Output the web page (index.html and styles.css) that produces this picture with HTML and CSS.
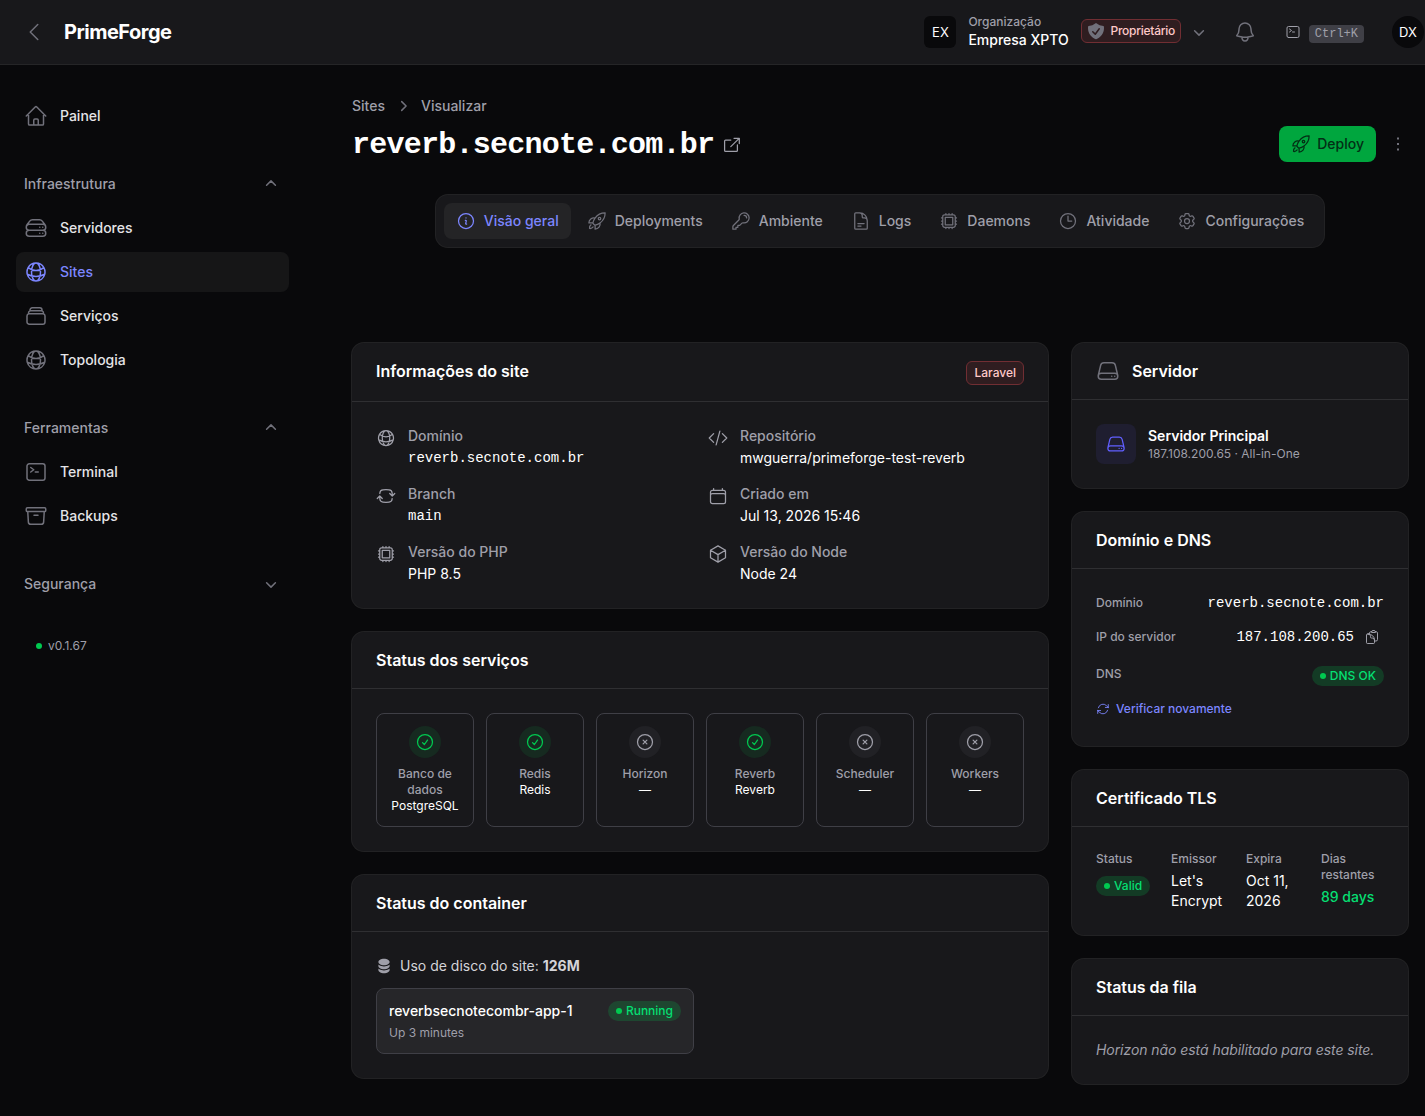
FILE: index.html
```html
<!DOCTYPE html>
<html lang="pt-BR">
<head>
    <meta charset="UTF-8">
    <meta name="viewport" content="width=device-width, initial-scale=1.0">
    <title>reverb.secnote.com.br - PrimeForge</title>
    <link rel="stylesheet" href="styles.css">
</head>
<body>

    <!-- Icon sprite -->
    <svg class="sprite" xmlns="http://www.w3.org/2000/svg">
        <symbol id="i-back" viewBox="0 0 24 24"><path d="M15.75 19.5 8.25 12l7.5-7.5"/></symbol>
        <symbol id="i-home" viewBox="0 0 24 24"><path d="M2.25 12l8.954-8.955c.44-.439 1.152-.439 1.591 0L21.75 12M4.5 9.75v10.125c0 .621.504 1.125 1.125 1.125H9.75v-4.875c0-.621.504-1.125 1.125-1.125h2.25c.621 0 1.125.504 1.125 1.125V21h4.125c.621 0 1.125-.504 1.125-1.125V9.75M8.25 21h8.25"/></symbol>
        <symbol id="i-server" viewBox="0 0 24 24"><path d="M5.25 14.25h13.5m-13.5 0a3 3 0 0 1-3-3m3 3a3 3 0 1 0 0 6h13.5a3 3 0 1 0 0-6m-16.5-3a3 3 0 0 1 3-3h13.5a3 3 0 0 1 3 3m-19.5 0a4.5 4.5 0 0 1 .9-2.7L5.737 5.1a3.375 3.375 0 0 1 2.7-1.35h7.126c1.062 0 2.062.5 2.7 1.35l2.587 3.45a4.5 4.5 0 0 1 .9 2.7m0 0a3 3 0 0 1-3 3m0 3h.008v.008h-.008v-.008Zm0-6h.008v.008h-.008v-.008Zm-3 6h.008v.008h-.008v-.008Zm0-6h.008v.008h-.008v-.008Z"/></symbol>
        <symbol id="i-drive" viewBox="0 0 24 24"><path d="M21.75 17.25v-.228a4.5 4.5 0 0 0-.12-1.03l-2.268-9.64a3.375 3.375 0 0 0-3.285-2.602H7.923a3.375 3.375 0 0 0-3.285 2.602l-2.268 9.64a4.5 4.5 0 0 0-.12 1.03v.228m19.5 0a3 3 0 0 1-3 3H5.25a3 3 0 0 1-3-3m19.5 0a3 3 0 0 0-3-3H5.25a3 3 0 0 0-3 3m16.5 0h.008v.008h-.008v-.008Zm-3 0h.008v.008h-.008v-.008Z"/></symbol>
        <symbol id="i-globe" viewBox="0 0 24 24"><path d="M12 21a9.004 9.004 0 0 0 8.716-6.747M12 21a9.004 9.004 0 0 1-8.716-6.747M12 21c2.485 0 4.5-4.03 4.5-9S14.485 3 12 3m0 18c-2.485 0-4.5-4.03-4.5-9S9.515 3 12 3m0 0a8.997 8.997 0 0 1 7.843 4.582M12 3a8.997 8.997 0 0 0-7.843 4.582m15.686 0A11.953 11.953 0 0 1 12 10.5c-2.998 0-5.74-1.1-7.843-2.918m15.686 0A8.959 8.959 0 0 1 21 12c0 .778-.099 1.533-.284 2.253m0 0A17.919 17.919 0 0 1 12 16.5c-3.162 0-6.133-.815-8.716-2.247m0 0A9.015 9.015 0 0 1 3 12c0-1.605.42-3.113 1.157-4.418"/></symbol>
        <symbol id="i-stack" viewBox="0 0 24 24"><path d="M6 6.878V6a2.25 2.25 0 0 1 2.25-2.25h7.5A2.25 2.25 0 0 1 18 6v.878m-12 0c.235-.083.487-.128.75-.128h10.5c.263 0 .515.045.75.128m-12 0A2.25 2.25 0 0 0 4.5 9v.878m13.5-3A2.25 2.25 0 0 1 19.5 9v.878m0 0a2.246 2.246 0 0 0-.75-.128H5.25c-.263 0-.515.045-.75.128m15 0A2.25 2.25 0 0 1 21 12v6a2.25 2.25 0 0 1-2.25 2.25H5.25A2.25 2.25 0 0 1 3 18v-6c0-.98.626-1.813 1.5-2.122"/></symbol>
        <symbol id="i-terminal" viewBox="0 0 24 24"><path d="m6.75 7.5 3 2.25-3 2.25m4.5 0h3m-9 8.25h13.5A2.25 2.25 0 0 0 21 18V6a2.25 2.25 0 0 0-2.25-2.25H5.25A2.25 2.25 0 0 0 3 6v12a2.25 2.25 0 0 0 2.25 2.25Z"/></symbol>
        <symbol id="i-archive" viewBox="0 0 24 24"><path d="m20.25 7.5-.625 10.632a2.25 2.25 0 0 1-2.247 2.118H6.622a2.25 2.25 0 0 1-2.247-2.118L3.75 7.5M10 11.25h4M3.375 7.5h17.25c.621 0 1.125-.504 1.125-1.125v-1.5c0-.621-.504-1.125-1.125-1.125H3.375c-.621 0-1.125.504-1.125 1.125v1.5c0 .621.504 1.125 1.125 1.125Z"/></symbol>
        <symbol id="i-up" viewBox="0 0 20 20"><path d="M5.6 11.3 10 6.9l4.4 4.4"/></symbol>
        <symbol id="i-down" viewBox="0 0 20 20"><path d="M5.6 8.7 10 13.1l4.4-4.4"/></symbol>
        <symbol id="i-right" viewBox="0 0 20 20"><path d="M8.7 5.6l4.4 4.4-4.4 4.4"/></symbol>
        <symbol id="i-bell" viewBox="0 0 24 24"><path d="M14.857 17.082a23.848 23.848 0 0 0 5.454-1.31A8.967 8.967 0 0 1 18 9.75V9A6 6 0 0 0 6 9v.75a8.967 8.967 0 0 1-2.312 6.022c1.733.64 3.56 1.085 5.455 1.31m5.714 0a24.255 24.255 0 0 1-5.714 0m5.714 0a3 3 0 1 1-5.714 0"/></symbol>
        <symbol id="i-shield" viewBox="0 0 20 20"><path fill-rule="evenodd" d="M9.661 2.237a.531.531 0 0 1 .678 0 11.947 11.947 0 0 0 7.078 2.749.5.5 0 0 1 .479.425c.069.52.104 1.05.104 1.59 0 5.162-3.26 9.563-7.834 11.256a.48.48 0 0 1-.332 0C5.26 16.564 2 12.163 2 7c0-.538.035-1.069.104-1.589a.5.5 0 0 1 .48-.425 11.947 11.947 0 0 0 7.077-2.75Zm4.196 5.954a.75.75 0 0 0-1.214-.882l-3.483 4.79-1.88-1.88a.75.75 0 1 0-1.06 1.061l2.5 2.5a.75.75 0 0 0 1.137-.089l4-5.5Z"/></symbol>
        <symbol id="i-external" viewBox="0 0 20 20"><path d="M8.8 5H3.6a1 1 0 0 0-1 1v9.4a1 1 0 0 0 1 1h10.8a1 1 0 0 0 1-1V9.8M8.8 11.6l8.4-8.2M12 3.3h5.3v5.2"/></symbol>
        <symbol id="i-rocket" viewBox="0 0 24 24"><path d="M15.59 14.37a6 6 0 0 1-5.84 7.38v-4.8m5.84-2.58a14.98 14.98 0 0 0 6.16-12.12A14.98 14.98 0 0 0 9.631 8.41m5.96 5.96a14.926 14.926 0 0 1-5.841 2.58m-.119-8.54a6 6 0 0 0-7.381 5.84h4.8m2.581-5.84a14.927 14.927 0 0 0-2.58 5.84m2.699 2.7c-.103.021-.207.041-.311.06a15.09 15.09 0 0 1-2.448-2.448 14.9 14.9 0 0 1 .06-.312m-2.24 2.39a4.493 4.493 0 0 0-1.757 4.306 4.493 4.493 0 0 0 4.306-1.758M16.5 9a1.5 1.5 0 1 1-3 0 1.5 1.5 0 0 1 3 0Z"/></symbol>
        <symbol id="i-dots" viewBox="0 0 20 20"><path d="M9 3.5h2v2H9zM9 9h2v2H9zM9 14.5h2v2H9z"/></symbol>
        <symbol id="i-info" viewBox="0 0 24 24"><path d="m11.25 11.25.041-.02a.75.75 0 0 1 1.063.852l-.708 2.836a.75.75 0 0 0 1.063.853l.041-.021M21 12a9 9 0 1 1-18 0 9 9 0 0 1 18 0Zm-9-3.75h.008v.008H12V8.25Z"/></symbol>
        <symbol id="i-key" viewBox="0 0 24 24"><path d="M15.75 5.25a3 3 0 0 1 3 3m3 0a6 6 0 0 1-7.029 5.912c-.563-.097-1.159.026-1.563.43L10.5 17.25H8.25v2.25H6v2.25H2.25v-2.818c0-.597.237-1.17.659-1.591l6.499-6.499c.404-.404.527-1 .43-1.563A6 6 0 1 1 21.75 8.25Z"/></symbol>
        <symbol id="i-document" viewBox="0 0 24 24"><path d="M19.5 14.25v-2.625a3.375 3.375 0 0 0-3.375-3.375h-1.5A1.125 1.125 0 0 1 13.5 7.125v-1.5a3.375 3.375 0 0 0-3.375-3.375H8.25m0 12.75h7.5m-7.5 3H12M10.5 2.25H5.625c-.621 0-1.125.504-1.125 1.125v17.25c0 .621.504 1.125 1.125 1.125h12.75c.621 0 1.125-.504 1.125-1.125V11.25a9 9 0 0 0-9-9Z"/></symbol>
        <symbol id="i-cpu" viewBox="0 0 24 24"><path d="M8.25 3v1.5M4.5 8.25H3m18 0h-1.5M4.5 12H3m18 0h-1.5m-15 3.75H3m18 0h-1.5M8.25 19.5V21M12 3v1.5m0 15V21m3.75-18v1.5m0 15V21m-9-1.5h10.5a2.25 2.25 0 0 0 2.25-2.25V6.75a2.25 2.25 0 0 0-2.25-2.25H6.75A2.25 2.25 0 0 0 4.5 6.75v10.5a2.25 2.25 0 0 0 2.25 2.25Zm.75-12h9v9h-9v-9Z"/></symbol>
        <symbol id="i-clock" viewBox="0 0 24 24"><path d="M12 6v6h4.5m4.5 0a9 9 0 1 1-18 0 9 9 0 0 1 18 0Z"/></symbol>
        <symbol id="i-cog" viewBox="0 0 24 24"><path d="M9.594 3.94c.09-.542.56-.94 1.11-.94h2.593c.55 0 1.02.398 1.11.94l.213 1.281c.063.374.313.686.645.87.074.04.147.083.22.127.325.196.72.257 1.075.124l1.217-.456a1.125 1.125 0 0 1 1.37.49l1.296 2.247a1.125 1.125 0 0 1-.26 1.431l-1.003.827c-.293.241-.438.613-.43.992a7.723 7.723 0 0 1 0 .255c-.008.378.137.75.43.991l1.004.827c.424.35.534.955.26 1.43l-1.298 2.247a1.125 1.125 0 0 1-1.369.491l-1.217-.456c-.355-.133-.75-.072-1.076.124a6.47 6.47 0 0 1-.22.128c-.331.183-.581.495-.644.869l-.213 1.281c-.09.543-.56.94-1.11.94h-2.594c-.55 0-1.019-.398-1.11-.94l-.213-1.281c-.062-.374-.312-.686-.644-.87a6.52 6.52 0 0 1-.22-.127c-.325-.196-.72-.257-1.076-.124l-1.217.456a1.125 1.125 0 0 1-1.369-.49l-1.297-2.247a1.125 1.125 0 0 1 .26-1.431l1.004-.827c.292-.24.437-.613.43-.991a6.932 6.932 0 0 1 0-.255c.007-.38-.138-.751-.43-.992l-1.004-.827a1.125 1.125 0 0 1-.26-1.43l1.297-2.247a1.125 1.125 0 0 1 1.37-.491l1.216.456c.356.133.751.072 1.076-.124.072-.044.146-.086.22-.128.332-.183.582-.495.644-.869l.214-1.28ZM15 12a3 3 0 1 1-6 0 3 3 0 0 1 6 0Z"/></symbol>
        <symbol id="i-code" viewBox="0 0 24 24"><path d="M17.25 6.75 22.5 12l-5.25 5.25m-10.5 0L1.5 12l5.25-5.25m7.5-3-4.5 16.5"/></symbol>
        <symbol id="i-branch" viewBox="0 0 24 24"><path d="M19.5 12c0-1.232-.046-2.453-.138-3.662a4.006 4.006 0 0 0-3.7-3.7 48.678 48.678 0 0 0-7.324 0 4.006 4.006 0 0 0-3.7 3.7c-.017.22-.032.441-.046.662M19.5 12l3-3m-3 3-3-3m-12 3c0 1.232.046 2.453.138 3.662a4.006 4.006 0 0 0 3.7 3.7 48.656 48.656 0 0 0 7.324 0 4.006 4.006 0 0 0 3.7-3.7c.017-.22.032-.441.046-.662M4.5 12l3 3m-3-3-3 3"/></symbol>
        <symbol id="i-calendar" viewBox="0 0 24 24"><path d="M6.75 3v2.25M17.25 3v2.25M3 18.75V7.5a2.25 2.25 0 0 1 2.25-2.25h13.5A2.25 2.25 0 0 1 21 7.5v11.25m-18 0A2.25 2.25 0 0 0 5.25 21h13.5A2.25 2.25 0 0 0 21 18.75m-18 0v-7.5A2.25 2.25 0 0 1 5.25 9h13.5A2.25 2.25 0 0 1 21 11.25v7.5"/></symbol>
        <symbol id="i-cube" viewBox="0 0 24 24"><path d="m21 7.5-9-5.25L3 7.5m18 0-9 5.25m9-5.25v9l-9 5.25M3 7.5l9 5.25M3 7.5v9l9 5.25m0-9v9"/></symbol>
        <symbol id="i-check" viewBox="0 0 24 24"><path d="M9 12.75 11.25 15 15 9.75M21 12a9 9 0 1 1-18 0 9 9 0 0 1 18 0Z"/></symbol>
        <symbol id="i-x" viewBox="0 0 24 24"><path d="m9.75 9.75 4.5 4.5m0-4.5-4.5 4.5M21 12a9 9 0 1 1-18 0 9 9 0 0 1 18 0Z"/></symbol>
        <symbol id="i-refresh" viewBox="0 0 24 24"><path d="M16.023 9.348h4.992v-.001M2.985 19.644v-4.992m0 0h4.992m-4.993 0 3.181 3.183a8.25 8.25 0 0 0 13.803-3.7M4.031 9.865a8.25 8.25 0 0 1 13.803-3.7l3.181 3.182m0-4.991v4.99"/></symbol>
        <symbol id="i-clipboard" viewBox="0 0 24 24"><path d="M8.25 7.5V6.108c0-1.135.845-2.098 1.976-2.192.373-.03.748-.057 1.123-.08M15.75 18H18a2.25 2.25 0 0 0 2.25-2.25V6.108c0-1.135-.845-2.098-1.976-2.192a48.424 48.424 0 0 0-1.123-.08M15.75 18.75v-1.875a3.375 3.375 0 0 0-3.375-3.375h-1.5a1.125 1.125 0 0 1-1.125-1.125v-1.5A3.375 3.375 0 0 0 6.375 7.5H5.25m11.9-3.664A2.251 2.251 0 0 0 15 2.25h-1.5a2.251 2.251 0 0 0-2.15 1.586m5.8 0c.065.21.1.433.1.664v.75h-6V4.5c0-.231.035-.454.1-.664M6.75 7.5H4.875c-.621 0-1.125.504-1.125 1.125v12c0 .621.504 1.125 1.125 1.125h9.75c.621 0 1.125-.504 1.125-1.125V16.5a9 9 0 0 0-9-9Z"/></symbol>
        <symbol id="i-disk" viewBox="0 0 20 20"><path d="M10 1c3.866 0 7 1.79 7 4s-3.134 4-7 4-7-1.79-7-4 3.134-4 7-4Zm5.694 8.13c.464-.264.91-.583 1.306-.952V10c0 2.21-3.134 4-7 4s-7-1.79-7-4V8.178c.396.37.842.688 1.306.953C5.838 10.006 7.854 10.5 10 10.5s4.162-.494 5.694-1.37ZM3 13.179V15c0 2.21 3.134 4 7 4s7-1.79 7-4v-1.822c-.396.37-.842.688-1.306.953-1.532.875-3.548 1.369-5.694 1.369s-4.162-.494-5.694-1.37A7.009 7.009 0 0 1 3 13.179Z"/></symbol>
    </svg>

    <header class="topbar">
        <div class="topbar-start">
            <svg class="icon icon-lg"><use href="#i-back"/></svg>
            <a class="logo">PrimeForge</a>
        </div>
        <div class="topbar-end">
            <div class="tenant">
                <span class="avatar avatar-square">EX</span>
                <div class="tenant-text">
                    <span class="tenant-label">Organização</span>
                    <span class="tenant-name">Empresa XPTO</span>
                </div>
                <span class="badge-red badge-role"><svg class="icon icon-md solid"><use href="#i-shield"/></svg>Proprietário</span>
                <svg class="icon chevron"><use href="#i-down"/></svg>
            </div>
            <svg class="icon icon-lg"><use href="#i-bell"/></svg>
            <div class="shortcut">
                <svg class="icon icon-sm"><use href="#i-terminal"/></svg>
                <kbd>Ctrl+K</kbd>
            </div>
            <span class="avatar avatar-round">DX</span>
        </div>
    </header>

    <div class="layout">
        <aside class="sidebar">
            <nav class="nav">
                <div class="nav-group">
                    <a class="nav-item"><svg class="icon icon-lg"><use href="#i-home"/></svg>Painel</a>
                </div>
                <div class="nav-group">
                    <div class="nav-title">Infraestrutura<svg class="icon chevron"><use href="#i-up"/></svg></div>
                    <a class="nav-item"><svg class="icon icon-lg"><use href="#i-server"/></svg>Servidores</a>
                    <a class="nav-item active"><svg class="icon icon-lg"><use href="#i-globe"/></svg>Sites</a>
                    <a class="nav-item"><svg class="icon icon-lg"><use href="#i-stack"/></svg>Serviços</a>
                    <a class="nav-item"><svg class="icon icon-lg"><use href="#i-globe"/></svg>Topologia</a>
                </div>
                <div class="nav-group">
                    <div class="nav-title">Ferramentas<svg class="icon chevron"><use href="#i-up"/></svg></div>
                    <a class="nav-item"><svg class="icon icon-lg"><use href="#i-terminal"/></svg>Terminal</a>
                    <a class="nav-item"><svg class="icon icon-lg"><use href="#i-archive"/></svg>Backups</a>
                </div>
                <div class="nav-group">
                    <div class="nav-title">Segurança<svg class="icon chevron"><use href="#i-down"/></svg></div>
                </div>
            </nav>
            <div class="version"><span class="dot"></span>v0.1.67</div>
        </aside>

        <main class="main">
            <nav class="breadcrumb">
                <a>Sites</a>
                <svg class="icon icon-md"><use href="#i-right"/></svg>
                <a>Visualizar</a>
            </nav>

            <div class="page-header">
                <h1>reverb.secnote.com.br</h1>
                <svg class="icon icon-md external"><use href="#i-external"/></svg>
                <div class="page-actions">
                    <button class="btn-deploy"><svg class="icon icon-md"><use href="#i-rocket"/></svg><span>Deploy</span></button>
                    <svg class="icon icon-md solid dots"><use href="#i-dots"/></svg>
                </div>
            </div>

            <nav class="tabs">
                <a class="tab active"><svg class="icon icon-md"><use href="#i-info"/></svg>Visão geral</a>
                <a class="tab"><svg class="icon icon-md"><use href="#i-rocket"/></svg>Deployments</a>
                <a class="tab"><svg class="icon icon-md"><use href="#i-key"/></svg>Ambiente</a>
                <a class="tab"><svg class="icon icon-md"><use href="#i-document"/></svg>Logs</a>
                <a class="tab"><svg class="icon icon-md"><use href="#i-cpu"/></svg>Daemons</a>
                <a class="tab"><svg class="icon icon-md"><use href="#i-clock"/></svg>Atividade</a>
                <a class="tab"><svg class="icon icon-md"><use href="#i-cog"/></svg>Configurações</a>
            </nav>

            <div class="columns">
                <div class="column">
                    <section class="card">
                        <div class="card-header">
                            <h2>Informações do site</h2>
                            <span class="badge-red badge-type">Laravel</span>
                        </div>
                        <div class="card-body info-grid">
                            <div class="info">
                                <svg class="icon icon-md"><use href="#i-globe"/></svg>
                                <div><p class="label">Domínio</p><p class="value mono">reverb.secnote.com.br</p></div>
                            </div>
                            <div class="info">
                                <svg class="icon icon-md"><use href="#i-code"/></svg>
                                <div><p class="label">Repositório</p><p class="value">mwguerra/primeforge-test-reverb</p></div>
                            </div>
                            <div class="info">
                                <svg class="icon icon-md"><use href="#i-branch"/></svg>
                                <div><p class="label">Branch</p><p class="value mono">main</p></div>
                            </div>
                            <div class="info">
                                <svg class="icon icon-md"><use href="#i-calendar"/></svg>
                                <div><p class="label">Criado em</p><p class="value">Jul 13, 2026 15:46</p></div>
                            </div>
                            <div class="info">
                                <svg class="icon icon-md"><use href="#i-cpu"/></svg>
                                <div><p class="label">Versão do PHP</p><p class="value">PHP 8.5</p></div>
                            </div>
                            <div class="info">
                                <svg class="icon icon-md"><use href="#i-cube"/></svg>
                                <div><p class="label">Versão do Node</p><p class="value">Node 24</p></div>
                            </div>
                        </div>
                    </section>

                    <section class="card">
                        <div class="card-header"><h2>Status dos serviços</h2></div>
                        <div class="card-body services">
                            <div class="service on">
                                <span class="service-icon"><svg class="icon icon-md"><use href="#i-check"/></svg></span>
                                <p class="service-label">Banco de dados</p><p>PostgreSQL</p>
                            </div>
                            <div class="service on">
                                <span class="service-icon"><svg class="icon icon-md"><use href="#i-check"/></svg></span>
                                <p class="service-label">Redis</p><p>Redis</p>
                            </div>
                            <div class="service">
                                <span class="service-icon"><svg class="icon icon-md"><use href="#i-x"/></svg></span>
                                <p class="service-label">Horizon</p><p>—</p>
                            </div>
                            <div class="service on">
                                <span class="service-icon"><svg class="icon icon-md"><use href="#i-check"/></svg></span>
                                <p class="service-label">Reverb</p><p>Reverb</p>
                            </div>
                            <div class="service">
                                <span class="service-icon"><svg class="icon icon-md"><use href="#i-x"/></svg></span>
                                <p class="service-label">Scheduler</p><p>—</p>
                            </div>
                            <div class="service">
                                <span class="service-icon"><svg class="icon icon-md"><use href="#i-x"/></svg></span>
                                <p class="service-label">Workers</p><p>—</p>
                            </div>
                        </div>
                    </section>

                    <section class="card">
                        <div class="card-header"><h2>Status do container</h2></div>
                        <div class="card-body">
                            <div class="disk">
                                <svg class="icon icon-sm solid"><use href="#i-disk"/></svg>
                                <span>Uso de disco do site: <b>126M</b></span>
                            </div>
                            <div class="containers">
                                <div class="container-box">
                                    <div class="container-top">
                                        <span class="container-name">reverbsecnotecombr-app-1</span>
                                        <span class="badge-green"><span class="dot"></span>Running</span>
                                    </div>
                                    <p class="container-uptime">Up 3 minutes</p>
                                </div>
                            </div>
                        </div>
                    </section>
                </div>

                <div class="column">
                    <section class="card">
                        <div class="card-header">
                            <svg class="icon icon-lg"><use href="#i-drive"/></svg>
                            <h2>Servidor</h2>
                        </div>
                        <div class="card-body server">
                            <span class="server-icon"><svg class="icon icon-md"><use href="#i-drive"/></svg></span>
                            <div>
                                <p class="server-name">Servidor Principal</p>
                                <p class="server-meta">187.108.200.65 · All-in-One</p>
                            </div>
                        </div>
                    </section>

                    <section class="card">
                        <div class="card-header"><h2>Domínio e DNS</h2></div>
                        <div class="card-body dns">
                            <div class="dns-row">
                                <span class="small-label">Domínio</span>
                                <span class="mono">reverb.secnote.com.br</span>
                            </div>
                            <div class="dns-row dns-ip">
                                <span class="small-label">IP do servidor</span>
                                <span class="mono">187.108.200.65<svg class="icon icon-sm"><use href="#i-clipboard"/></svg></span>
                            </div>
                            <div class="dns-row dns-status">
                                <span class="small-label">DNS</span>
                                <span class="badge-green"><span class="dot"></span>DNS OK</span>
                            </div>
                            <a class="recheck"><svg class="icon"><use href="#i-refresh"/></svg>Verificar novamente</a>
                        </div>
                    </section>

                    <section class="card">
                        <div class="card-header"><h2>Certificado TLS</h2></div>
                        <div class="card-body tls">
                            <div>
                                <p class="small-label">Status</p>
                                <span class="badge-green"><span class="dot"></span>Valid</span>
                            </div>
                            <div>
                                <p class="small-label">Emissor</p>
                                <p class="tls-value">Let's Encrypt</p>
                            </div>
                            <div>
                                <p class="small-label">Expira</p>
                                <p class="tls-value">Oct 11, 2026</p>
                            </div>
                            <div>
                                <p class="small-label">Dias restantes</p>
                                <p class="tls-value tls-days">89 days</p>
                            </div>
                        </div>
                    </section>

                    <section class="card">
                        <div class="card-header"><h2>Status da fila</h2></div>
                        <div class="card-body">
                            <p class="queue-empty">Horizon não está habilitado para este site.</p>
                        </div>
                    </section>
                </div>
            </div>
        </main>
    </div>

</body>
</html>
```
FILE: styles.css
```css
:root {
    --bg: #09090b;
    --surface: #18181b;
    --border: #3f3f46;
    --muted: #9f9fa9;
    --icon: #71717b;
    --primary: #7c86ff;
    --green: #00c950;
    --mono: "Liberation Mono", monospace;
}

* {
    box-sizing: border-box;
}

body {
    margin: 0;
    min-height: 100vh;
    background: var(--bg);
    color: white;
    font-family: "Inter", sans-serif;
    font-size: 14px;
    line-height: 20px;
    overflow: hidden;
}

h1, h2, p {
    margin: 0;
}

.sprite {
    display: none;
}

/* Icons */
.icon {
    flex-shrink: 0;
    fill: none;
    stroke: currentColor;
    stroke-width: 1.5;
    stroke-linecap: round;
    stroke-linejoin: round;
    color: var(--icon);
}

.icon.solid {
    fill: currentColor;
    stroke: none;
}

.icon-sm {
    width: 16px;
    height: 16px;
}

.icon-md, .chevron {
    width: 20px;
    height: 20px;
}

.icon-lg {
    width: 24px;
    height: 24px;
}

.mono {
    font-family: var(--mono);
}

/* Top bar */
.topbar {
    display: flex;
    align-items: center;
    justify-content: space-between;
    height: 65px;
    padding: 0 1px 0 22px;
    background: var(--surface);
    border-bottom: 1px solid #252527;
}

.topbar-start {
    display: flex;
    align-items: center;
    gap: 18px;
}

.logo {
    font-size: 20px;
    font-weight: 700;
    line-height: 28px;
    letter-spacing: -0.5px;
}

.topbar-end, .tenant, .shortcut {
    display: flex;
    align-items: center;
}

.avatar {
    display: flex;
    align-items: center;
    justify-content: center;
    width: 32px;
    height: 32px;
    background: var(--bg);
    font-size: 13px;
}

.avatar-square {
    border-radius: 6px;
    margin-right: 12px;
}

.avatar-round {
    border-radius: 50%;
    margin-left: 28px;
}

.tenant {
    margin-right: 24px;
}

.tenant-text {
    display: flex;
    flex-direction: column;
    margin-right: 12px;
}

.tenant-label {
    font-size: 12px;
    line-height: 16px;
    font-weight: 500;
    color: var(--muted);
}

.tenant-name {
    font-weight: 500;
}

.badge-red {
    display: flex;
    align-items: center;
    height: 24px;
    border: 1px solid #712e33;
    border-radius: 6px;
    background: #2f1d20;
    color: #ffc9c9;
    font-size: 12px;
    font-weight: 500;
}

.badge-role {
    justify-content: center;
    gap: 4px;
    width: 100px;
    margin: 0 8px 2px 0;
    letter-spacing: -0.25px;
}

.badge-type {
    padding: 0 7px;
    margin: 2px 0 0 auto;
}

.shortcut {
    margin-left: 28px;
    gap: 8px;
}

.shortcut .icon {
    color: var(--muted);
}

kbd {
    height: 18px;
    margin-top: 3px;
    padding: 0 6px;
    border-radius: 4px;
    background: var(--border);
    color: var(--muted);
    font-family: var(--mono);
    font-size: 12px;
    line-height: 18px;
}

/* Sidebar */
.layout {
    display: flex;
}

.sidebar {
    width: 320px;
    padding: 31px 31px 0 16px;
}

.nav {
    display: flex;
    flex-direction: column;
    gap: 28px;
}

.nav-group {
    display: flex;
    flex-direction: column;
    gap: 4px;
}

.nav-item, .nav-title {
    display: flex;
    align-items: center;
    height: 40px;
    padding: 0 8px;
    border-radius: 8px;
    font-weight: 500;
}

.nav-item {
    gap: 12px;
    color: #e4e4e7;
}

.nav-title {
    justify-content: space-between;
    color: var(--muted);
}

.nav-item.active {
    background: #161617;
}

.active, .active .icon {
    color: var(--primary);
}

.dot {
    width: 6px;
    height: 6px;
    border-radius: 50%;
    background: var(--green);
}

.version {
    display: flex;
    align-items: center;
    gap: 6px;
    margin-top: 32px;
    padding-left: 20px;
    color: var(--muted);
    font-size: 12px;
}

/* Main content */
.main {
    width: 1056px;
    margin-left: 32px;
    padding-top: 31px;
}

.breadcrumb {
    display: flex;
    gap: 8px;
    color: var(--muted);
    font-weight: 500;
}

.page-header {
    display: flex;
    align-items: center;
    height: 36px;
    margin-top: 10px;
}

h1 {
    padding-top: 2px;
    font-family: var(--mono);
    font-size: 30px;
    font-weight: 700;
    line-height: 36px;
    letter-spacing: -0.75px;
}

.external {
    margin: 2px 0 0 8px;
    color: var(--muted);
    stroke-width: 1.25;
}

.page-actions {
    display: flex;
    align-items: center;
    gap: 12px;
    margin-left: auto;
}

.btn-deploy {
    display: flex;
    align-items: center;
    gap: 6px;
    height: 36px;
    padding: 0 12px;
    border: none;
    border-radius: 8px;
    background: #00a63e;
    color: #032e15;
    font-family: inherit;
    font-size: 14px;
    font-weight: 500;
    line-height: 20px;
}

.btn-deploy .icon {
    color: #032e15;
}

.tabs {
    display: flex;
    gap: 4px;
    width: fit-content;
    margin: 33px auto 0;
    padding: 8px;
    border-radius: 12px;
    background: var(--surface);
    box-shadow: 0 0 0 1px #222224;
}

.tab {
    display: flex;
    gap: 8px;
    padding: 8px 12px;
    border-radius: 8px;
    color: var(--muted);
    font-weight: 500;
}

.tab.active {
    background: #242426;
    color: var(--primary);
}

.columns {
    display: grid;
    grid-template-columns: 696px 336px;
    gap: 24px;
    margin-top: 96px;
}

.column {
    display: flex;
    flex-direction: column;
    gap: 24px;
}

/* Cards */
.card {
    border-radius: 12px;
    background: var(--surface);
    box-shadow: 0 0 0 1px #222224;
}

.card-header {
    display: flex;
    align-items: flex-start;
    gap: 12px;
    padding: 16px 24px;
}

h2 {
    font-size: 16px;
    font-weight: 600;
    line-height: 24px;
}

.card-body {
    padding: 24px;
    border-top: 1px solid #2f2f32;
}

.info-grid {
    display: grid;
    grid-template-columns: 1fr 1fr;
    gap: 16px;
}

.info {
    display: flex;
    gap: 12px;
}

.info .icon {
    margin-top: 2px;
    color: var(--muted);
}

.label {
    color: var(--muted);
    font-weight: 500;
}

.value {
    margin-top: 2px;
}

/* Services */
.services {
    display: grid;
    grid-template-columns: repeat(6, 1fr);
    gap: 12px;
}

.service {
    display: flex;
    flex-direction: column;
    align-items: center;
    min-height: 114px;
    padding: 12px;
    border: 1px solid var(--border);
    border-radius: 8px;
    font-size: 12px;
    line-height: 16px;
    text-align: center;
}

.service-icon {
    display: flex;
    align-items: center;
    justify-content: center;
    width: 32px;
    height: 32px;
    margin-bottom: 8px;
    border-radius: 50%;
    background: #212125;
}

.service-icon .icon {
    color: var(--muted);
}

.on .service-icon {
    background: #162a20;
}

.on .icon {
    color: var(--green);
}

.service-label, .small-label {
    color: var(--muted);
    font-size: 12px;
    line-height: 16px;
    font-weight: 500;
}

/* Container status */
.disk {
    display: flex;
    align-items: center;
    gap: 8px;
    margin-bottom: 12px;
    color: #d4d4d8;
}

.disk .icon {
    color: var(--muted);
}

.containers {
    display: grid;
    grid-template-columns: 1fr 1fr;
    gap: 12px;
}

.container-box {
    padding: 12px;
    border: 1px solid var(--border);
    border-radius: 8px;
    background: #262629;
}

.container-top {
    display: flex;
    justify-content: space-between;
}

.container-name {
    font-weight: 500;
}

.container-uptime {
    margin-top: 4px;
    color: var(--muted);
    font-size: 12px;
    line-height: 16px;
}

.badge-green {
    display: flex;
    align-items: center;
    gap: 4px;
    width: fit-content;
    height: 20px;
    padding: 0 8px;
    border-radius: 10px;
    background: rgba(0, 201, 80, 0.2);
    color: #05df72;
    font-size: 12px;
    font-weight: 500;
}

/* Server */
.server {
    display: flex;
    align-items: center;
    gap: 12px;
}

.server-icon {
    display: flex;
    align-items: center;
    justify-content: center;
    width: 40px;
    height: 40px;
    border-radius: 8px;
    background: #1f1e30;
}

.server-icon .icon {
    color: #615fff;
}

.server-name {
    font-weight: 600;
}

.server-meta {
    color: var(--muted);
    font-size: 12px;
    line-height: 16px;
}

/* DNS */
.dns {
    padding-bottom: 29px;
}

.dns-row {
    display: flex;
    align-items: center;
    justify-content: space-between;
}

.dns-ip {
    height: 24px;
    margin-top: 12px;
}

.dns-ip .mono {
    display: flex;
    align-items: center;
    gap: 10px;
    padding-right: 4px;
}

.dns-ip .icon {
    color: var(--muted);
}

.dns-status {
    height: 24px;
    margin-top: 13px;
}

.dns-status .badge-green {
    align-self: flex-end;
}

.recheck {
    display: flex;
    align-items: center;
    gap: 6px;
    margin-top: 15px;
    color: var(--primary);
    font-size: 12px;
    line-height: 16px;
    font-weight: 500;
}

.recheck .icon {
    width: 14px;
    height: 14px;
    color: var(--primary);
}

/* TLS */
.tls {
    display: grid;
    grid-template-columns: repeat(4, 1fr);
    gap: 12px;
}

.tls .badge-green {
    margin-top: 9px;
}

.tls-value {
    margin-top: 4px;
}

.tls-days {
    color: #05df72;
    font-weight: 500;
}

.queue-empty {
    color: var(--muted);
    font-style: italic;
    letter-spacing: -0.07px;
}
```
